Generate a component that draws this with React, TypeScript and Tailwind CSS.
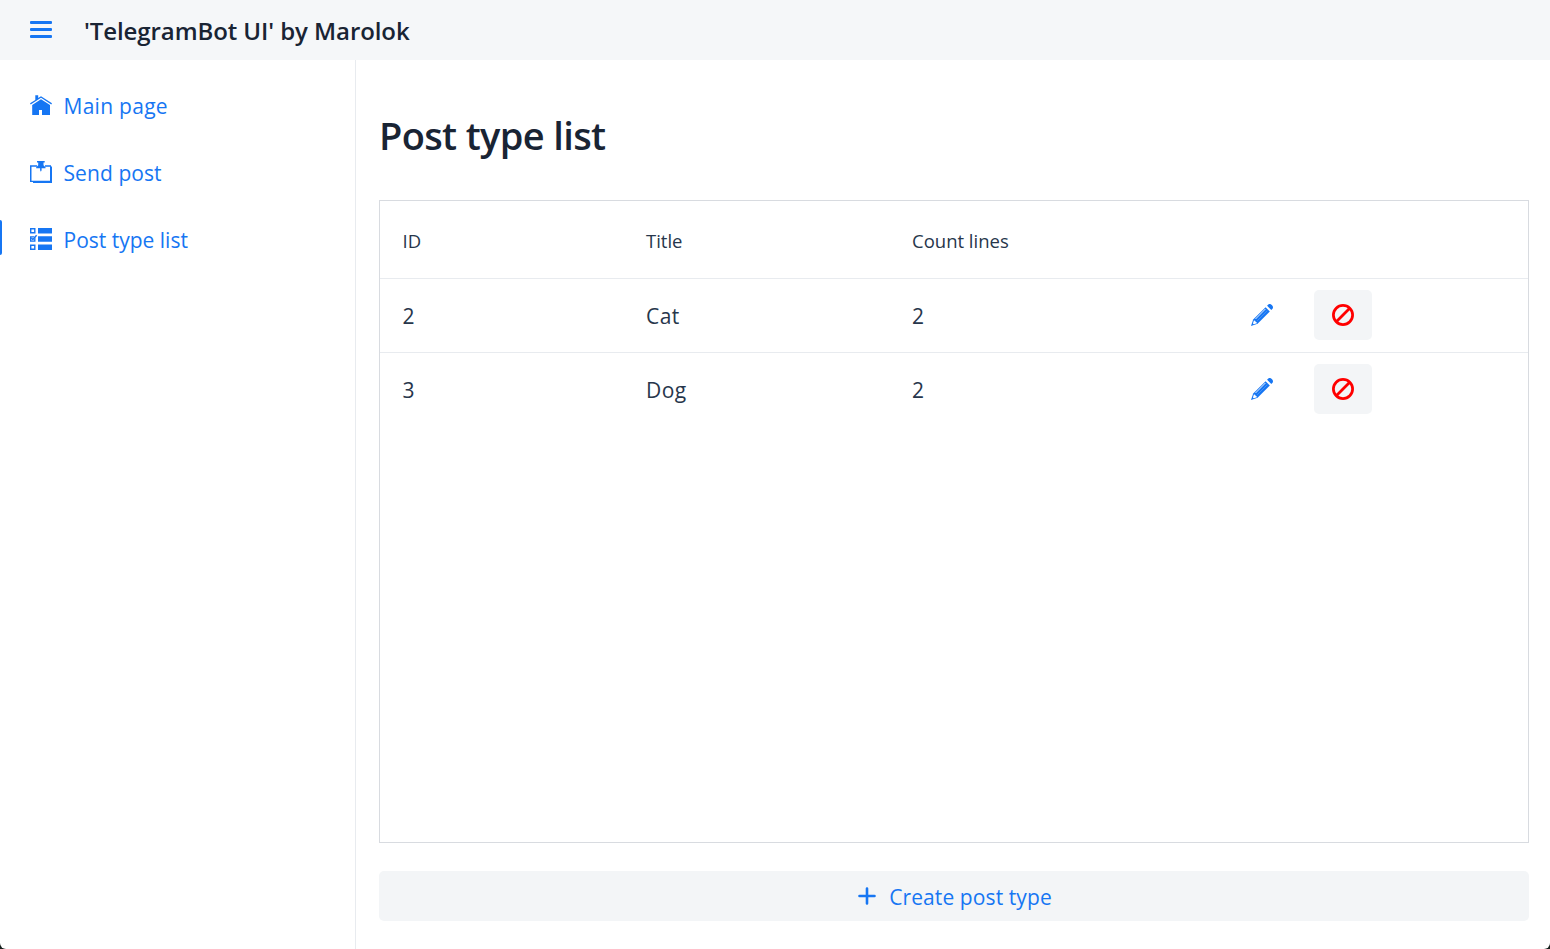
import type { ReactNode } from "react";

const sans = "font-['Segoe_UI','Open_Sans','Noto_Sans',sans-serif]";

function MenuIcon() {
  return (
    <svg width="22" height="22" viewBox="0 0 22 22" fill="#1676f3">
      <rect x="0" y="2" width="22" height="3" rx="1" />
      <rect x="0" y="9" width="22" height="3" rx="1" />
      <rect x="0" y="16" width="22" height="3" rx="1" />
    </svg>
  );
}

function HomeIcon() {
  return (
    <svg width="22" height="22" viewBox="0 0 22 22" fill="#1676f3">
      <path d="M22 9.3 11 2.2 8.2 4V1.2H5.3v4.7L0 9.3l.7 1.1L11 3.8l10.3 6.6z" />
      <path d="M11 5.3 2.2 11V21H9v-5h3v5h8V11z" />
    </svg>
  );
}

function PinIcon() {
  return (
    <svg width="22" height="22" viewBox="0 0 22 22" fill="#1676f3">
      <path d="M0 4.2h7v1.6H1.5v14H20v-14h-5V4.2h6v1.4h1V22H3v-1H0z" />
      <path d="M7 0h7.7v1.5h-1.2v2.7l2 2.1v1H6.2v-1l2-2.1V1.5H7zM10.1 7h1.5v2.2l-.75 1.6-.75-1.6z" />
    </svg>
  );
}

function ListIcon() {
  return (
    <svg width="22" height="22" viewBox="0 0 22 22" fill="#1676f3">
      <path d="M8 0h14v5.5H8zM8 8.2h14v5.6H8zM8 16.5h14V22H8z" />
      <path
        fillRule="evenodd"
        d="M0 0h5.5v5.5H0zM1.4 1.4v2.7h2.7V1.4zM0 16.5h5.5V22H0zM1.4 17.9v2.7h2.7v-2.7zM0 8.2h4.7L3.5 9.5H1.4v2.9h2.7v-1.6l1.4-1.5v4.5H0z"
      />
      <path d="m1.4 9.9 1.5 1.6L6.6 7.3" fill="none" stroke="#1676f3" strokeWidth="1.4" />
    </svg>
  );
}

function PencilIcon() {
  return (
    <svg width="22" height="22" viewBox="0 0 22 22" fill="#1676f3">
      <path d="M16.1 1.7C17 .6 17.8 0 18.7 0 20.3 0 22 1.7 22 3.3c0 1-.6 1.8-1.7 2.7z" />
      <path d="m14.6 3.2 4.2 4.2L6.6 19.8 0 22l2.2-6.6z" />
      <path d="M4.5 15 14.4 5" stroke="#fff" strokeWidth=".9" fill="none" />
      <path d="M6.2 16.8 16.2 6.7" stroke="#fff" strokeOpacity=".35" strokeWidth=".6" fill="none" />
      <path d="m2.9 16.4 1.2.3.5 1 1 .5.3 1.1-3.1 1-.9-.9z" fill="#fff" />
    </svg>
  );
}

function BanIcon() {
  return (
    <svg width="22" height="22" viewBox="0 0 22 22" fill="none" stroke="#ff0000" strokeWidth="2.75">
      <circle cx="11" cy="11" r="9.6" />
      <path d="M4.3 17.7 17.7 4.3" />
    </svg>
  );
}

function PlusIcon() {
  return (
    <svg width="18" height="18" viewBox="0 0 18 18" fill="none" stroke="#1676f3" strokeWidth="2.6" strokeLinecap="round">
      <path d="M9 1.5v15M1.5 9h15" />
    </svg>
  );
}

function NavItem({ icon, active, children }: { icon: ReactNode; active?: boolean; children: ReactNode }) {
  return (
    <a className="flex h-[67px] items-center">
      <span className={active ? "mb-1.5 h-[35px] w-0.5 rounded-r-sm bg-[#1676f3]" : "w-0.5"} />
      <span className="ml-7 flex w-[33.5px] pb-1">{icon}</span>
      <span className="text-[21px] leading-none tracking-[0.08px] text-[#1676f3]">{children}</span>
    </a>
  );
}

const rows = [
  { id: 2, title: "Cat", lines: 2 },
  { id: 3, title: "Dog", lines: 2 },
];

export default function App() {
  return (
    <div className="h-screen overflow-hidden bg-[#16211d]">
      <div className={`flex h-full flex-col overflow-hidden rounded-b-[6px] bg-white text-[#27364b] ${sans}`}>
        <header className="flex h-[60px] shrink-0 items-center bg-[#f5f7f9] pl-[30px]">
          <MenuIcon />
          <h1 className="ml-8 pt-0.5 text-2xl leading-none font-[560] tracking-[-0.08px] text-[#192434]">
            'TelegramBot UI' by Marolok
          </h1>
        </header>
        <div className="flex min-h-0 flex-1">
          <nav className="w-[356px] shrink-0 border-r border-[#e8ebef] pt-[13px]">
            <NavItem icon={<HomeIcon />}>
              <span className="tracking-[0.28px]">Main page</span>
            </NavItem>
            <NavItem icon={<PinIcon />}>Send post</NavItem>
            <NavItem icon={<ListIcon />} active>
              <span className="tracking-normal">Post type list</span>
            </NavItem>
          </nav>
          <main className="flex flex-1 flex-col pr-[21px] pb-7 pl-[23px]">
            <h2 className="flex h-[140px] items-center pt-2.5 text-[38px] leading-none font-[580] tracking-[-0.65px] text-[#192434]">
              Post type list
            </h2>
            <section className="flex-1 border border-[#d8dbe0]">
              <div className="grid h-[78px] grid-cols-[243.5px_266px_339px_1fr] items-center border-b border-[#e8ebef] pt-[3px] pl-[22.5px] text-[18.5px]">
                <span>ID</span>
                <span>Title</span>
                <span>Count lines</span>
              </div>
              {rows.map((row) => (
                <div
                  key={row.id}
                  className="grid h-[74px] grid-cols-[243.5px_266px_339px_1fr] items-center border-b border-[#e8ebef] pl-[22.5px] text-[21px] tracking-[0.4px] last:border-b-0"
                >
                  <span className="pt-0.5">{row.id}</span>
                  <span className="pt-0.5">{row.title}</span>
                  <span className="pt-0.5">{row.lines}</span>
                  <div className="flex h-full items-start gap-[41px] pt-[11px]">
                    <button aria-label="Edit" className="flex h-[50px] items-center">
                      <PencilIcon />
                    </button>
                    <button aria-label="Delete" className="flex h-[50px] w-[58px] items-center justify-center rounded-[5px] bg-[#f3f5f7]">
                      <BanIcon />
                    </button>
                  </div>
                </div>
              ))}
            </section>
            <button className="mt-7 flex h-[50px] items-center justify-center gap-[13px] rounded-[5px] bg-[#f3f5f7] pl-0.5 text-[21px] leading-none tracking-[0.1px] text-[#1676f3]">
              <PlusIcon />
              <span className="pt-0.5">Create post type</span>
            </button>
          </main>
        </div>
      </div>
    </div>
  );
}
